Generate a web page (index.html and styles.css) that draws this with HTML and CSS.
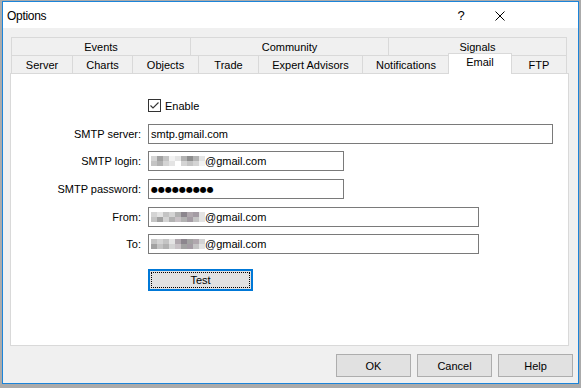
FILE: index.html
```html
<!DOCTYPE html>
<html>
<head>
<meta charset="utf-8">
<link rel="stylesheet" href="styles.css">
</head>
<body>
<div class="window">
  <div class="titlebar">
    <span class="title">Options</span>
    <span class="cap-help">?</span>
    <span class="cap-close">
      <svg width="10" height="10" viewBox="0 0 10 10"><path d="M0.5 0.5 L9.5 9.5 M9.5 0.5 L0.5 9.5" stroke="#000" stroke-width="1" fill="none"/></svg>
    </span>
  </div>
  <div class="client">
    <div class="tabs">
      <div class="tabrow row1">
        <div class="tab">Events</div>
        <div class="tab">Community</div>
        <div class="tab last">Signals</div>
      </div>
      <div class="tabrow row2">
        <div class="tab">Server</div>
        <div class="tab">Charts</div>
        <div class="tab">Objects</div>
        <div class="tab">Trade</div>
        <div class="tab">Expert Advisors</div>
        <div class="tab">Notifications</div>
        <div class="tab selected">Email</div>
        <div class="tab last">FTP</div>
      </div>
    </div>
    <div class="panel">
      <div class="row row-enable">
        <span class="label"></span>
        <span class="checkbox">
          <svg width="11" height="11" viewBox="0 0 11 11"><path d="M1.5 5.5 L4 8 L9.5 2.5" stroke="#333" stroke-width="1.1" fill="none"/></svg>
        </span>
        <span class="check-text">Enable</span>
      </div>
      <div class="row r1">
        <span class="label">SMTP server:</span>
        <div class="input w-long">smtp.gmail.com</div>
      </div>
      <div class="row r2">
        <span class="label">SMTP login:</span>
        <div class="input w-short">
          <span class="mosaic">
            <i class="g3"></i><i class="g6"></i><i class="g4"></i><i class="g1"></i><i class="g2"></i><i class="g5"></i><i class="g7"></i><i class="g5"></i><i class="g2"></i>
            <i class="g4"></i><i class="g5"></i><i class="g3"></i><i class="g2"></i><i class="g0"></i><i class="g3"></i><i class="g4"></i><i class="g3"></i><i class="g1"></i>
          </span>@gmail.com
        </div>
      </div>
      <div class="row r3">
        <span class="label">SMTP password:</span>
        <div class="input w-short"><span class="dots">●●●●●●●●●</span></div>
      </div>
      <div class="row r4">
        <span class="label">From:</span>
        <div class="input w-mid">
          <span class="mosaic">
            <i class="g3"></i><i class="g2"></i><i class="g4"></i><i class="g3"></i><i class="g5"></i><i class="p7"></i><i class="p5"></i><i class="p6"></i><i class="g2"></i>
            <i class="g4"></i><i class="g6"></i><i class="g3"></i><i class="g5"></i><i class="p4"></i><i class="g5"></i><i class="p6"></i><i class="g4"></i><i class="g2"></i>
          </span>@gmail.com
        </div>
      </div>
      <div class="row r5">
        <span class="label">To:</span>
        <div class="input w-mid">
          <span class="mosaic">
            <i class="g4"></i><i class="g3"></i><i class="g4"></i><i class="g2"></i><i class="p5"></i><i class="p7"></i><i class="g6"></i><i class="p5"></i><i class="g3"></i>
            <i class="g6"></i><i class="g4"></i><i class="g5"></i><i class="g3"></i><i class="p4"></i><i class="g6"></i><i class="p6"></i><i class="g4"></i><i class="g2"></i>
          </span>@gmail.com
        </div>
      </div>
      <div class="row r6">
        <span class="label"></span>
        <button class="test-btn"><span class="focus">Test</span></button>
      </div>
    </div>
    <div class="buttons">
      <button class="btn">OK</button>
      <button class="btn">Cancel</button>
      <button class="btn">Help</button>
    </div>
  </div>
</div>
</body>
</html>
```
FILE: styles.css
```css
html, body {
  margin: 0;
  padding: 0;
}
body {
  background: #ababab;
  font-family: "Liberation Sans", Arial, sans-serif;
  font-size: 11px;
  color: #000;
  width: 581px;
  height: 388px;
  overflow: hidden;
}
.window {
  margin: 1px 0 0 2px;
  width: 577px;
  height: 383px;
  box-sizing: border-box;
  border: 1px solid #1c84d9;
  background: #f0f0f0;
  display: flex;
  flex-direction: column;
}
.titlebar {
  height: 26px;
  flex: none;
  background: #fff;
  display: flex;
  align-items: center;
  padding-left: 4px;
}
.title {
  font-size: 12px;
  letter-spacing: -0.3px;
  margin-top: 1px;
}
.cap-help {
  margin-left: auto;
  width: 20px;
  text-align: center;
  font-size: 13px;
  margin-top: 1px;
}
.cap-close {
  display: flex;
  margin-left: 24px;
  margin-right: 73px;
  margin-top: 1px;
}
.client {
  flex: 1;
  display: flex;
  flex-direction: column;
  padding: 9px 8px 0 7px;
}
.tabs {
  margin-left: 1px;
  width: 556px;
}
.tabrow {
  display: grid;
  height: 18px;
}
.row1 {
  grid-template-columns: 179px 198px 179px;
}
.row2 {
  grid-template-columns: 61px 60px 66px 60px 104px 87px 62px 56px;
}
.tab {
  box-sizing: border-box;
  border-top: 1px solid #d9d9d9;
  border-left: 1px solid #d9d9d9;
  background: #f0f0f0;
  text-align: center;
  padding-top: 1px;
  line-height: 16px;
  white-space: nowrap;
}
.tab.last {
  border-right: 1px solid #d9d9d9;
}
.tab.selected {
  position: relative;
  z-index: 2;
  background: #fff;
  border: 1px solid #d9d9d9;
  border-bottom: none;
  margin: -2px -1px -1px -1px;
  padding-top: 0;
  line-height: 17px;
}
.panel {
  box-sizing: border-box;
  width: 559px;
  height: 273px;
  background: #fff;
  border: 1px solid #d9d9d9;
  padding-top: 25px;
  position: relative;
  z-index: 1;
}
.row {
  display: flex;
  align-items: center;
}
.label {
  width: 130px;
  margin-right: 7px;
  text-align: right;
  flex: none;
}
.row-enable {
  height: 13px;
}
.checkbox {
  box-sizing: border-box;
  width: 13px;
  height: 13px;
  border: 1px solid #333;
  display: flex;
  align-items: center;
  justify-content: center;
}
.check-text {
  margin-left: 4px;
  padding-top: 1px;
}
.r1 { margin-top: 12px; }
.r2 { margin-top: 7px; }
.r3 { margin-top: 8px; }
.r4 { margin-top: 8px; }
.r5 { margin-top: 7px; }
.r6 { margin-top: 15px; }
.input {
  box-sizing: border-box;
  height: 20px;
  border: 1px solid #7a7a7a;
  background: #fff;
  padding-left: 2px;
  display: flex;
  align-items: center;
  white-space: nowrap;
}
.w-long { width: 405px; }
.w-short { width: 196px; }
.w-mid { width: 331px; }
.mosaic {
  display: grid;
  grid-template-columns: repeat(9, 6px);
  grid-template-rows: 5px 5px;
  margin-right: 0;
}
.mosaic i { display: block; }
.g0 { background: #ffffff; }
.g1 { background: #f2f2f2; }
.g2 { background: #e4e4e4; }
.g3 { background: #d4d4d4; }
.g4 { background: #c4c4c4; }
.g5 { background: #b2b2b2; }
.g6 { background: #a2a2a2; }
.g7 { background: #8e8e8e; }
.p4 { background: #c8c2c6; }
.p5 { background: #b0a8ae; }
.p6 { background: #a49ca4; }
.p7 { background: #8c868e; }
.dots {
  font-family: "DejaVu Sans", sans-serif;
  font-size: 8px;
  letter-spacing: 0;
}
.test-btn {
  box-sizing: border-box;
  width: 105px;
  height: 22px;
  border: 2px solid #0078d7;
  background: #e1e1e1;
  padding: 1px;
  font: inherit;
  color: #000;
  display: flex;
}
.test-btn .focus {
  flex: 1;
  border: 1px dotted #000;
  display: flex;
  align-items: center;
  justify-content: center;
}
.buttons {
  display: flex;
  justify-content: flex-end;
  gap: 6px;
  margin-top: 8px;
  margin-right: -3px;
}
.btn {
  box-sizing: border-box;
  width: 75px;
  height: 23px;
  border: 1px solid #adadad;
  background: #e1e1e1;
  font: inherit;
  color: #000;
  padding: 0;
}
```
